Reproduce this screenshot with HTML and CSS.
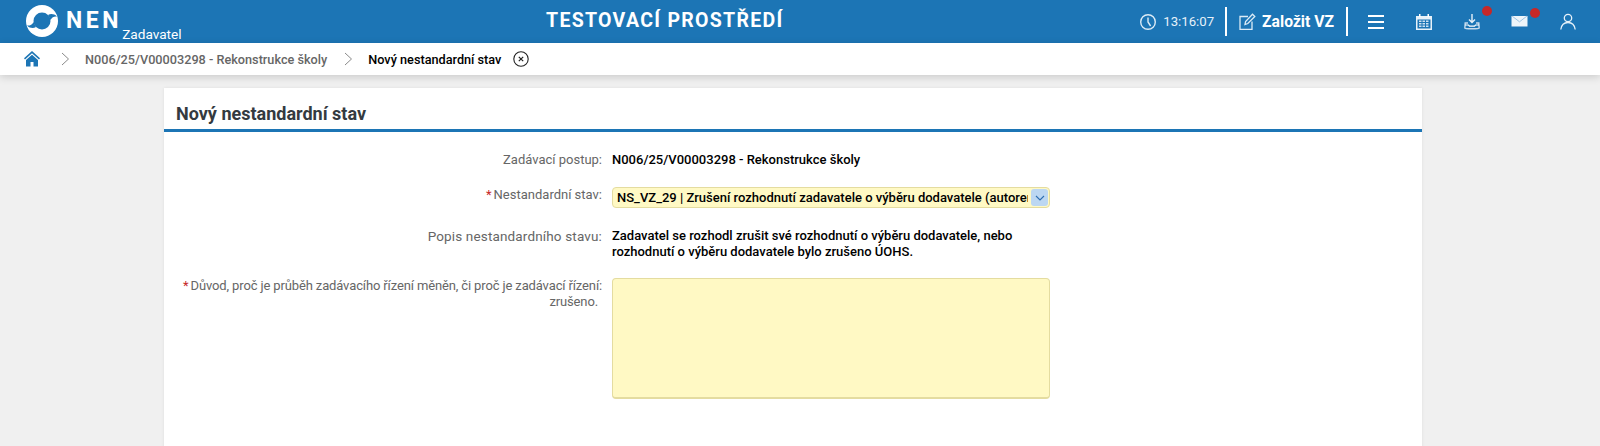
FILE: index.html
```html
<!DOCTYPE html>
<html lang="cs">
<head>
<meta charset="utf-8">
<title>Nový nestandardní stav</title>
<link rel="stylesheet" href="styles.css">
</head>
<body>
<header class="topbar">
  <div class="brand">
    <svg class="logo" width="32" height="32" viewBox="0 0 32 32"><circle cx="16" cy="16" r="16" fill="#fff"/><circle cx="16" cy="16" r="8.500" fill="#1c75b5"/><path d="M22 10C24.500 8.500 28 8.500 31 11.500C28.500 11 26 12 24.500 15Z" fill="#1c75b5"/><path d="M10 22C7.500 23.500 4 23.500 1 20.500C3.500 21 6 20 7.500 17Z" fill="#1c75b5"/></svg>
    <span class="nen">NEN</span>
    <span class="role">Zadavatel</span>
  </div>
  <div class="env">TESTOVACÍ PROSTŘEDÍ</div>
  <div class="tools">
    <svg class="ico clock" width="18" height="18" viewBox="0 0 18 18" fill="none" stroke="#dcebf6" stroke-width="1.4"><circle cx="9" cy="9" r="7.3"/><path d="M9 4.5V9l2.600 4"/></svg>
    <span class="time">13:16:07</span>
    <i class="sep"></i>
    <svg class="ico edit" width="17" height="17" viewBox="0 0 17 17" fill="none" stroke="#dcebf6" stroke-width="1.3"><path d="M9 3.500H1v12.800h12V8.500"/><path d="M6 11.500l.6-3L13.500 1.200l2.300 2.300-7 7z"/></svg>
    <span class="create">Založit VZ</span>
    <i class="sep"></i>
    <svg class="ico menu" width="16" height="14" viewBox="0 0 16 14" fill="#fff"><rect y="0" width="16" height="2"/><rect y="6" width="16" height="2"/><rect y="12" width="16" height="2"/></svg>
    <svg class="ico cal" width="16" height="16" viewBox="0 0 16 16"><path d="M0 2h16v14H0z" fill="#e6f1f9"/><path d="M3 0h1.500v3H3zM11.500 0H13v3h-1.500z" fill="#fff"/><path d="M1.500 5.500h13v9h-13z" fill="#1c75b5"/><path d="M3 6.500h2.500V8H3zM6.500 6.500h2.500V8H6.500zM10 6.500h2.500V8H10zM3 9h2.500v1.500H3zM6.500 9h2.500v1.500H6.500zM10 9h2.500v1.500H10zM3 11.500h2.500V13H3zM6.500 11.500h2.500V13H6.500zM10 11.500h2.500V13H10z" fill="#cfe2f1"/></svg>
    <span class="badged dl">
      <svg width="16" height="16" viewBox="0 0 16 16" fill="none" stroke="#e6f1f9" stroke-width="1.400"><path d="M8 0v8.500M5 5.500l3 3 3-3"/><path d="M4 9H1.200L.8 14.200c0 .8 14.400 .8 14.400 0L14.800 9H12" stroke="#c7dcee"/><path d="M1 11h3.500l1 1.200h5l1-1.200H15" stroke="#fff" stroke-width="1.200"/></svg>
      <b class="dot"></b>
    </span>
    <span class="badged mail">
      <svg width="17" height="12" viewBox="0 0 17 12"><path d="M0.500 1h16v10.500h-16z" fill="#eef5fa"/><path d="M1 1l7.500 5.800L16 1" fill="none" stroke="#9cc4e4"/></svg>
      <b class="dot"></b>
    </span>
    <svg class="ico user" width="16" height="17" viewBox="0 0 16 17" fill="none" stroke="#e6f1f9" stroke-width="1.300"><circle cx="8" cy="5" r="3.700"/><path d="M.8 16.500C1.500 11.500 4.500 9.500 8 9.500s6.500 2 7.200 7"/></svg>
  </div>
</header>
<nav class="crumbs">
  <svg class="home" width="16" height="16" viewBox="0 0 16 16" fill="#1c75b5"><path d="M8 0 0 7.300l1 1.100L8 2.200l7 6.200 1-1.100z"/><path d="M8 3.800 2 9v6.500h4.500V11h3v4.500H14V9z"/></svg>
  <svg class="chev" width="9" height="14" viewBox="0 0 9 14" fill="none" stroke="#8a8a8a"><path d="M1 1l6.500 6L1 13"/></svg>
  <span class="crumb">N006/25/V00003298 - Rekonstrukce školy</span>
  <svg class="chev" width="9" height="14" viewBox="0 0 9 14" fill="none" stroke="#8a8a8a"><path d="M1 1l6.500 6L1 13"/></svg>
  <span class="crumb current">Nový nestandardní stav</span>
  <svg class="close" width="16" height="16" viewBox="0 0 16 16" fill="none" stroke="#222"><circle cx="8" cy="8" r="7.200" stroke-width="1.100"/><path d="M5.800 5.800l4.400 4.400M10.200 5.800l-4.400 4.400" stroke-width="1.200"/></svg>
</nav>
<main class="stage">
  <section class="panel">
    <h1 class="title">Nový nestandardní stav</h1>
    <div class="form">
      <div class="row r-proc">
        <div class="label">Zadávací postup:</div>
        <div class="value">N006/25/V00003298 - Rekonstrukce školy</div>
      </div>
      <div class="row r-sel">
        <div class="label"><span class="req">*</span>Nestandardní stav:</div>
        <div class="select"><span class="sel-text">NS_VZ_29 | Zrušení rozhodnutí zadavatele o výběru dodavatele (autoremedura)</span><span class="arrow"><svg width="10" height="6" viewBox="0 0 10 6" fill="none" stroke="#2f6fb0" stroke-width="1.100"><path d="M1 1l4 4 4-4"/></svg></span></div>
      </div>
      <div class="row r-desc">
        <div class="label">Popis nestandardního stavu:</div>
        <div class="value">Zadavatel se rozhodl zrušit své rozhodnutí o výběru dodavatele, nebo rozhodnutí o výběru dodavatele bylo zrušeno ÚOHS.</div>
      </div>
      <div class="row r-area">
        <div class="label"><span class="req">*</span>Důvod, proč je průběh zadávacího řízení měněn, či proč je zadávací řízení: <span class="tail">zrušeno.</span></div>
        <div class="area"></div>
      </div>
    </div>
  </section>
</main>
</body>
</html>
```
FILE: styles.css
```css
* { box-sizing: border-box; }
html, body { margin: 0; height: 446px; overflow: hidden; }
body { background: #f0f0f0; font-family: Roboto, "Liberation Sans", sans-serif; font-size: 13px; color: #000; }

.topbar { height: 43px; background: #1c75b5; display: flex; align-items: center; color: #fff; }
.brand { display: flex; align-items: flex-start; padding: 5px 0 0 26px; height: 43px; width: 546px; flex: none; }
.logo { flex: none; }
.nen { font-size: 23px; line-height: 32px; font-weight: 700; letter-spacing: 3.6px; margin-left: 8px; }
.role { font-size: 13.6px; line-height: 16px; margin: 21px 0 0 0; }
.env { font-size: 19.5px; font-weight: 700; letter-spacing: 1.3px; position: relative; top: -1px; white-space: nowrap; }
.tools { flex: 1; display: flex; align-items: center; justify-content: flex-end; padding-right: 24px; height: 43px; }
.ico { flex: none; }
.clock { margin-right: 6px; }
.time { font-size: 13.2px; color: #e6f1f9; margin-right: 11px; }
.sep { width: 2px; height: 29px; background: #fff; flex: none; }
.edit { margin: 0 0 0 12px; }
.create { font-size: 15.7px; font-weight: 700; margin: 0 12px 0 6px; }
.menu { margin-left: 20px; }
.cal { margin-left: 32px; }
.badged { position: relative; display: flex; flex: none; }
.dl { margin-left: 32px; }
.mail { margin-left: 31px; position: relative; top: -1px; }
.dot { position: absolute; width: 10px; height: 10px; border-radius: 50%; background: #c62828; }
.dl .dot { left: 18px; top: -8px; }
.mail .dot { left: 19px; top: -7px; }
.user { margin-left: 32px; }

.crumbs { height: 32px; background: #fff; display: flex; align-items: center; padding-left: 24px; box-shadow: 0 2px 8px rgba(0,0,0,.16); position: relative; }
.home { flex: none; }
.chev { flex: none; margin: 0 15px 0 21px; }
.crumb { font-size: 12.7px; font-weight: 500; color: #666; }
.crumb.current { color: #000; }
.close { margin-left: 12px; }
.crumbs .crumb + .chev { margin-left: 17px; margin-right: 15px; }

.stage { padding: 13px 178px 0 164px; }
.panel { background: #fff; height: 400px; box-shadow: 0 0 3px rgba(0,0,0,.08); }
.title { margin: 0; height: 44px; padding: 15px 0 0 12px; font-size: 18px; line-height: 21px; font-weight: 700; color: #343a40; border-bottom: 3px solid #1c75b5; }

.form { padding-top: 20px; }
.row { display: grid; grid-template-columns: 438px 438px; column-gap: 10px; font-size: 13px; line-height: 16px; }
.label { color: #666; text-align: right; }
.value { color: #000; font-weight: 500; }
.req { color: #c62828; margin-right: 2px; }
.r-proc { height: 35px; }
.r-sel { height: 41px; }
.r-desc { height: 50px; }
.r-desc .label { font-size: 13.5px; letter-spacing: .15px; }
.r-area .label { letter-spacing: -.13px; }
.tail { display: block; padding-right: 4px; }
.select { height: 21px; background: #fff9c4; border: 1px solid #e4dca0; border-radius: 4px; display: flex; align-items: center; font-weight: 500; padding-left: 4px; overflow: hidden; }
.sel-text { flex: 1; min-width: 0; white-space: nowrap; overflow: hidden; color: #000; margin-right: 3px; }
.arrow { flex: none; width: 17px; height: 17px; margin-right: 1px; background: #bcd7f2; border-radius: 3px; display: flex; align-items: center; justify-content: center; }
.area { height: 121px; background: #fff9c4; border: 1px solid #e4dca0; border-bottom-width: 2px; border-radius: 4px; }
```
